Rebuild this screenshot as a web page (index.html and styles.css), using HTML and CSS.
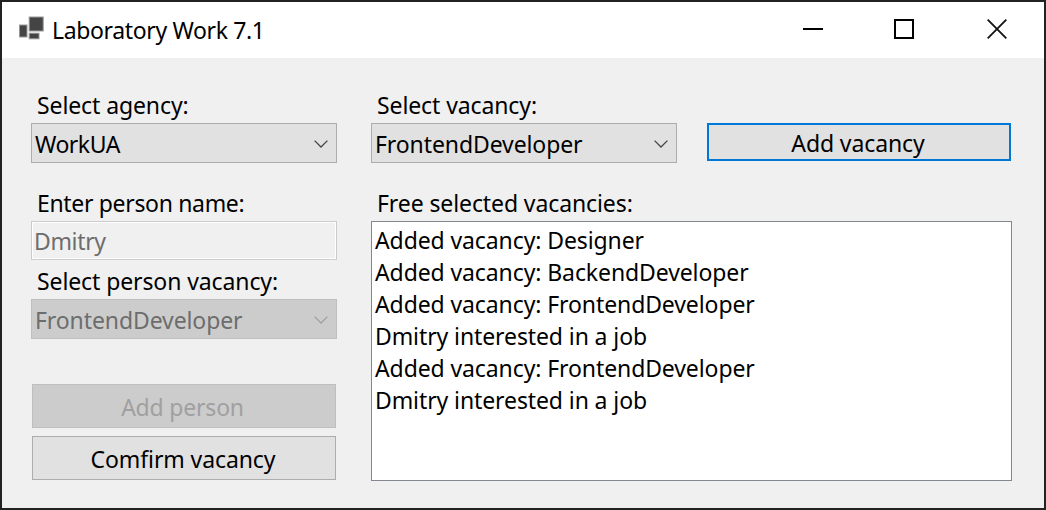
FILE: index.html
```
<!DOCTYPE html>
<html lang="en">
<head>
<meta charset="utf-8">
<title>Laboratory Work 7.1</title>
<link rel="stylesheet" href="styles.css">
</head>
<body>
<div class="window">
  <header class="titlebar">
    <svg class="app-icon" width="26" height="24" viewBox="0 0 26 24">
      <g fill="#444" stroke="#999" stroke-width="1">
        <rect x="10.2" y="1" width="14" height="14"/>
        <rect x=".5" y="9" width="7.5" height="12"/>
        <rect x="10.2" y="17.2" width="9.8" height="5.6"/>
      </g>
    </svg>
    <h1 class="title">Laboratory Work 7.1</h1>
    <div class="controls">
      <svg class="min" width="20" height="22" viewBox="0 0 20 22"><path d="M0 11h20" stroke="#000" stroke-width="2"/></svg>
      <svg class="max" width="20" height="20" viewBox="0 0 20 20"><rect x="1" y="1" width="18" height="18" fill="none" stroke="#000" stroke-width="2"/></svg>
      <svg class="close" width="20" height="20" viewBox="0 0 20 20"><path d="M.7.7l18.6 18.6M19.3.7L.7 19.3" stroke="#111" stroke-width="1.8"/></svg>
    </div>
  </header>
  <main class="form">
    <section class="left">
      <label class="label">Select agency:</label>
      <div class="combo"><span class="t-work">WorkUA</span><svg class="chevron" width="14" height="8" viewBox="0 0 14 8"><path d="M.6.6L7 7 13.4.6" fill="none" stroke="currentColor" stroke-width="1.3"/></svg></div>
      <label class="label label-name t-name">Enter person name:</label>
      <div class="textbox">Dmitry</div>
      <label class="label label-person">Select person vacancy:</label>
      <div class="combo disabled"><span>FrontendDeveloper</span><svg class="chevron" width="14" height="8" viewBox="0 0 14 8"><path d="M.6.6L7 7 13.4.6" fill="none" stroke="currentColor" stroke-width="1.3"/></svg></div>
      <button class="button add-person" disabled>Add person</button>
      <button class="button confirm">Comfirm vacancy</button>
    </section>
    <section class="right">
      <label class="label">Select vacancy:</label>
      <div class="row">
        <div class="combo"><span>FrontendDeveloper</span><svg class="chevron" width="14" height="8" viewBox="0 0 14 8"><path d="M.6.6L7 7 13.4.6" fill="none" stroke="currentColor" stroke-width="1.3"/></svg></div>
        <button class="button default">Add vacancy</button>
      </div>
      <label class="label label-name">Free selected vacancies:</label>
      <ul class="list">
        <li>Added vacancy: Designer</li>
        <li>Added vacancy: BackendDeveloper</li>
        <li>Added vacancy: FrontendDeveloper</li>
        <li>Dmitry interested in a job</li>
        <li>Added vacancy: FrontendDeveloper</li>
        <li>Dmitry interested in a job</li>
      </ul>
    </section>
  </main>
</div>
</body>
</html>
```
FILE: styles.css
```
* { box-sizing: border-box; }
body { margin: 0; font: 400 23px/32px "Noto Sans", sans-serif; color: #000; letter-spacing: -.1px; }
.window { width: 1046px; height: 510px; border: 2px solid #222; background: #f0f0f0; overflow: hidden; }
.titlebar { height: 56px; background: #fff; display: flex; align-items: flex-start; padding: 14px 37px 0 17px; }
.title { margin: -2px 0 0 7px; font: inherit; letter-spacing: -.36px; flex: 1; }
.controls { display: flex; gap: 71px; padding-top: 3px; }
.min { margin-top: -1px; }
.close { margin-left: 2px; }
.form { display: flex; gap: 34px; padding: 31px 32px 0 29px; white-space: nowrap; }
.left { width: 306px; display: flex; flex-direction: column; }
.right { width: 641px; display: flex; flex-direction: column; }
.label { display: block; height: 34px; padding-left: 6px; }
.t-name { letter-spacing: -.33px; }
.t-work { letter-spacing: -.5px; }
.combo { width: 306px; height: 40px; border: 1px solid #adadad; background: #e1e1e1; display: flex; align-items: center; justify-content: space-between; padding: 2px 8px 0 3px; }
.chevron { color: #444; margin-top: -1px; }
.combo.disabled { background: #ccc; border-color: #bfbfbf; color: #6d6d6d; }
.disabled .chevron { color: #a0a0a0; }
.label-name { margin-top: 24px; }
.textbox { height: 39px; border: 1px solid #ccc; box-shadow: inset 0 0 0 1px #fff; color: #6d6d6d; padding: 3px 2px; letter-spacing: -.35px; }
.label-person { margin-top: 5px; }
.button { font: inherit; letter-spacing: inherit; color: #000; height: 44px; border: 1px solid #adadad; background: #e1e1e1; margin: 0 1px; padding: 3px 0 0; }
.button:disabled { background: #ccc; border-color: #bfbfbf; color: #a0a0a0; }
.button.add-person { margin-top: 45px; padding: 2px 3px 0 0; letter-spacing: -.2px; }
.button.confirm { margin-top: 8px; padding: 2px 2px 0 0; }
.row { display: flex; gap: 30px; height: 40px; }
.button.default { width: 304px; height: 38px; border: 2px solid #0078d7; margin: 0; padding: 1px 2px 0 0; }
.list { list-style: none; margin: 0; height: 260px; border: 1px solid #828790; background: #fff; padding: 2px 3px; }
```
